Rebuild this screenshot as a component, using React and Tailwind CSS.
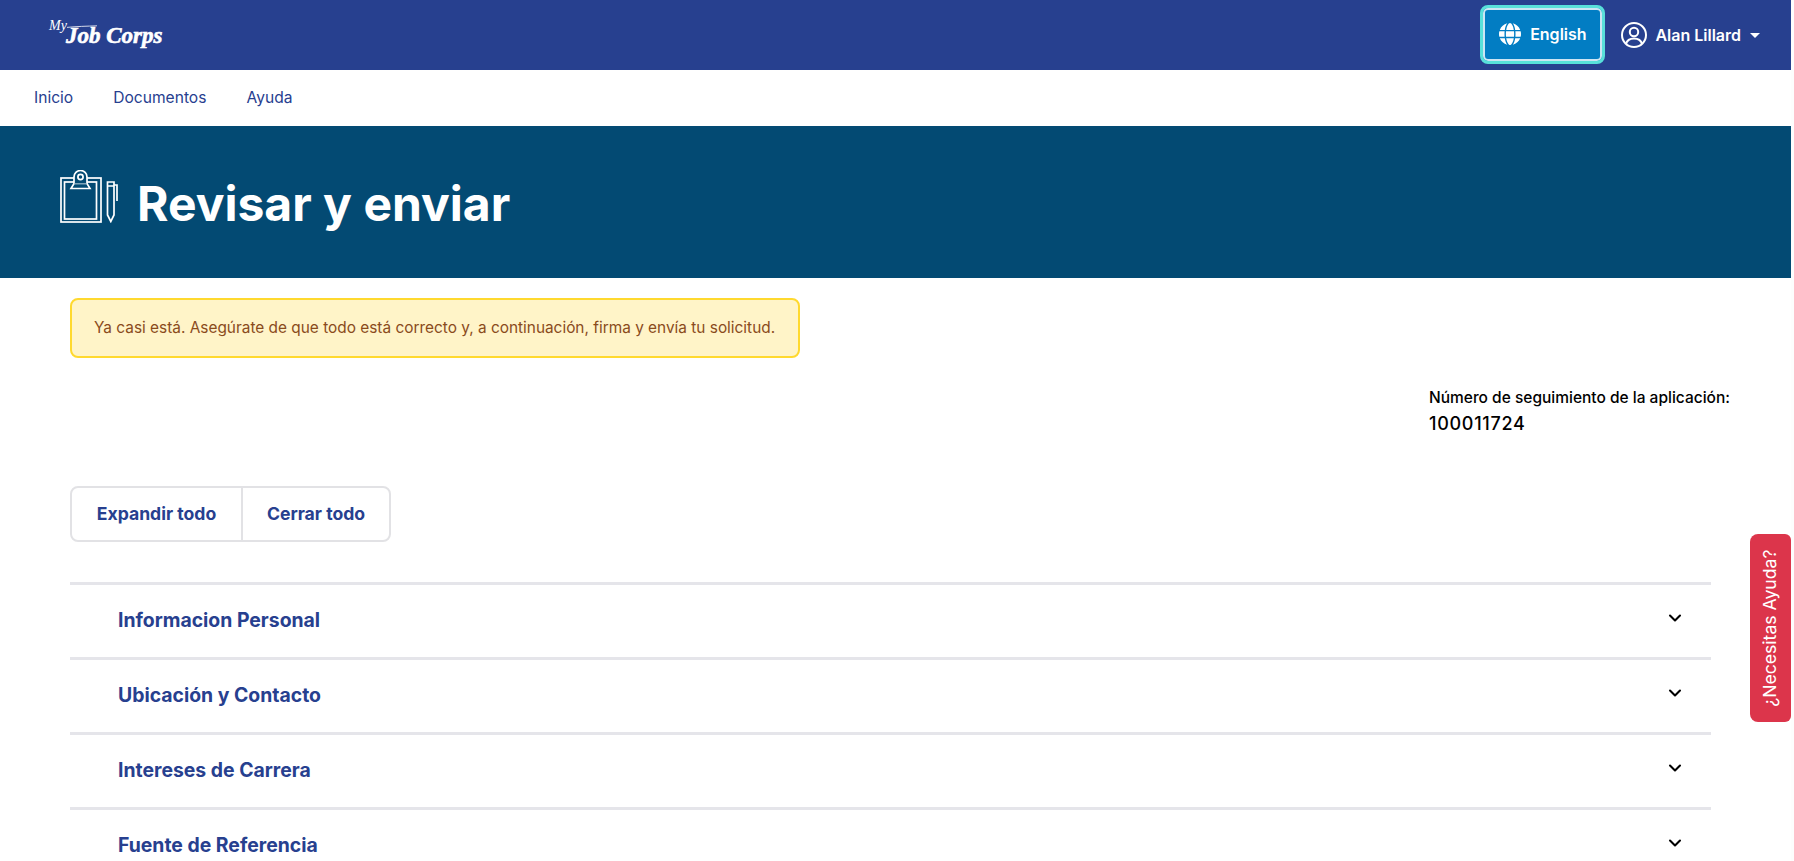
import { ChevronDown } from "lucide-react";

const sections = ["Informacion Personal", "Ubicación y Contacto", "Intereses de Carrera", "Fuente de Referencia"];

function Globe() {
    return (
        <svg viewBox="0 0 512 512" className="w-[22px] h-[22px]" fill="white">
            <path d="M352 256c0 22.2-1.2 43.6-3.3 64H163.3c-2.2-20.4-3.3-41.8-3.3-64s1.2-43.6 3.3-64H348.7c2.2 20.4 3.3 41.8 3.3 64zm28.8-64H503.9c5.3 20.5 8.1 41.9 8.1 64s-2.8 43.5-8.1 64H380.8c2.1-20.6 3.2-42 3.2-64s-1.1-43.4-3.2-64zm112.6-32H376.7c-10-63.9-29.8-117.4-55.3-151.6c78.3 20.7 142 77.5 171.9 151.6zm-149.1 0H167.7c6.1-36.4 15.5-68.6 27-94.7c10.5-23.6 22.2-40.7 33.5-51.5C239.4 3.2 248.7 0 256 0s16.6 3.2 27.8 13.8c11.3 10.8 23 27.9 33.5 51.5c11.6 26 20.9 58.2 27 94.7zm-209 0H18.6C48.6 85.9 112.2 29.1 190.6 8.4C165.1 42.6 145.3 96.1 135.3 160zM8.1 192H131.2c-2.1 20.6-3.2 42-3.2 64s1.1 43.4 3.2 64H8.1C2.8 299.5 0 278.1 0 256s2.8-43.5 8.1-64zM194.7 446.6c-11.6-26-20.9-58.2-27-94.6H344.3c-6.1 36.4-15.5 68.6-27 94.6c-10.5 23.6-22.2 40.7-33.5 51.5C272.6 508.8 263.3 512 256 512s-16.6-3.2-27.8-13.8c-11.3-10.8-23-27.9-33.5-51.5zM135.3 352c10 63.9 29.8 117.4 55.3 151.6C112.2 482.9 48.6 426.1 18.6 352H135.3zm358.1 0c-30 74.1-93.6 130.9-171.9 151.6c25.5-34.2 45.2-87.7 55.3-151.6H493.4z" />
        </svg>
    );
}

function UserCircle() {
    return (
        <svg viewBox="0 0 26 26" className="w-[26px] h-[26px]" fill="none" stroke="white" strokeWidth="2">
            <circle cx="13" cy="13" r="12" />
            <circle cx="13" cy="10" r="4.2" />
            <path d="M5 22c1-4 4-5.6 8-5.6s7 1.6 8 5.6" />
        </svg>
    );
}

function ClipboardPen() {
    return (
        <svg viewBox="0 0 58 53" className="w-[58px] h-[53px] -mt-[11px]" fill="none" stroke="white" strokeWidth="1.7">
            <rect x="1" y="8" width="40" height="44" />
            <rect x="4.5" y="12" width="32" height="37" />
            <path d="M11 18.5l3-5h13l3 5z" fill="#034a73" />
            <path d="M14 13.5V7a6.5 6.5 0 0 1 13 0v6.5" fill="#034a73" />
            <circle cx="20.5" cy="7" r="2.6" />
            <path d="M47.5 12h6.5v33l-3.2 6.5-3.3-6.5z" />
            <path d="M47.5 16h6.5M54 15h3v16" />
        </svg>
    );
}

function Logo() {
    return (
        <div className="relative w-[115px] h-[34px] ml-[49px] mt-[1px]">
            <span className="absolute left-0 -top-[1px] text-white italic text-[14px] leading-[16px] font-['Liberation_Serif',serif]">My</span>
            <span className="absolute left-[17px] top-[5px] text-white italic font-bold text-[23px] leading-[24px] whitespace-nowrap font-['Liberation_Serif',serif] [-webkit-text-stroke:0.6px_white]">Job Corps</span>
            <svg viewBox="0 0 30 3" className="absolute left-[18px] top-[6px] w-[30px] h-[3px]" fill="none" stroke="white" strokeWidth="0.8">
                <path d="M0 2.4C9 1.4 20 1.2 30 0.8" />
            </svg>
        </div>
    );
}

export default function App() {
    return (
        <div className="h-[861px] bg-[#fdfdfd]">
            <div className="w-[1791px] h-[861px] overflow-hidden relative bg-white font-['Inter',sans-serif]">
                <header className="h-[70px] bg-[#27408f] flex items-center justify-between">
                    <Logo />
                    <div className="flex items-center mr-[31px]">
                        <button className="w-[125px] h-[59px] -mt-[2px] flex items-center justify-center gap-[9px] bg-[#027dc3] rounded-[8px] border-[3px] border-[#58e0da] ring-2 ring-inset ring-white/80 text-white font-semibold text-[16px]">
                            <Globe />
                            English
                        </button>
                        <div className="flex items-center gap-[8px] ml-[16px] text-white font-semibold text-[16px]">
                            <UserCircle />
                            Alan Lillard
                            <span className="ml-[1px] w-0 h-0 border-x-[5px] border-x-transparent border-t-[5px] border-t-white" />
                        </div>
                    </div>
                </header>
                <nav className="h-[56px] flex items-center gap-[40px] pl-[34px] text-[#27408f] text-[15.6px]">
                    <a>Inicio</a>
                    <a>Documentos</a>
                    <a>Ayuda</a>
                </nav>
                <section className="h-[152px] bg-[#034a73] flex items-center pl-[60px] gap-[19px]">
                    <ClipboardPen />
                    <h1 className="mt-[3px] text-white font-bold text-[48px] leading-none">Revisar y enviar</h1>
                </section>
                <main className="pl-[70px] pr-[80px]">
                    <div className="mt-[20px] w-[730px] h-[60px] flex items-center pl-[22px] bg-[#fff4c8] border-2 border-[#ffd92f] rounded-[8px] text-[#8a4b1c] text-[15.4px] whitespace-nowrap">
                        Ya casi está. Asegúrate de que todo está correcto y, a continuación, firma y envía tu solicitud.
                    </div>
                    <div className="mt-[28px] ml-[1359px] text-black whitespace-nowrap">
                        <p className="text-[15.5px] leading-[24px] font-medium">Número de seguimiento de la aplicación:</p>
                        <p className="text-[18px] tracking-[0.7px] leading-[27px] font-medium">100011724</p>
                    </div>
                    <div className="mt-[49px] w-[321px] h-[56px] flex border-2 border-[#e2e2e5] rounded-[8px] text-[#27408f] font-bold text-[17.6px]">
                        <button className="w-[171px] border-r-2 border-[#e2e2e5] text-center">Expandir todo</button>
                        <button className="flex-1 text-center">Cerrar todo</button>
                    </div>
                    <div className="mt-[40px]">
                        {sections.map((title) => (
                            <div key={title} className="h-[75px] border-t-[3px] border-[#e5e5ea] pl-[48px] pr-[26px] flex items-center justify-between">
                                <h2 className="text-[#27408f] font-bold text-[19.4px]">{title}</h2>
                                <ChevronDown size={20} strokeWidth={2.5} className="text-black -mt-[7px]" />
                            </div>
                        ))}
                    </div>
                </main>
                <button className="absolute right-0 top-[534px] w-[41px] h-[188px] flex items-center justify-center bg-[#dc354b] text-white text-[17.6px] rounded-[8px] rounded-r-[6px]">
                    <span className="-rotate-90 whitespace-nowrap">¿Necesitas Ayuda?</span>
                </button>
            </div>
        </div>
    );
}
